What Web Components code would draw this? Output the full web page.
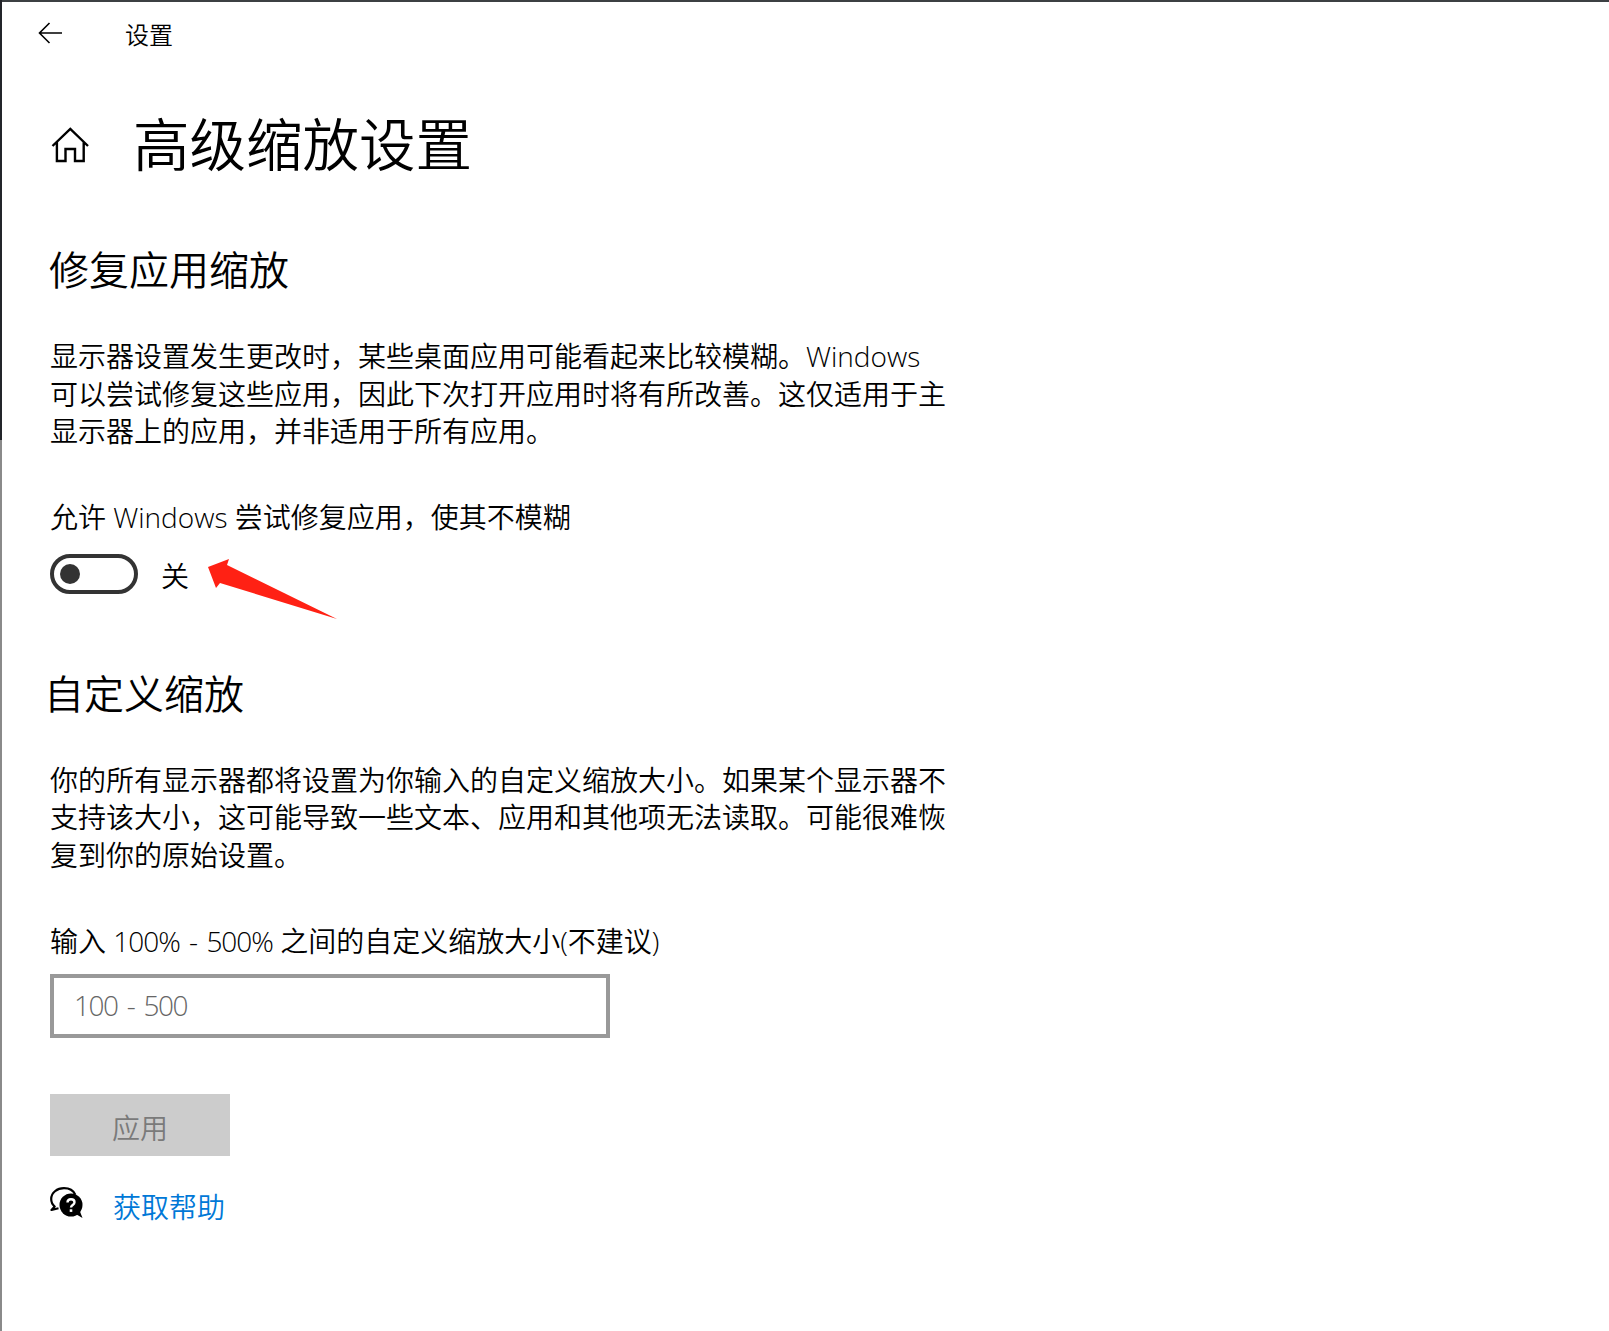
<!DOCTYPE html>
<html lang="zh-CN">
<head>
<meta charset="utf-8">
<title>高级缩放设置</title>
<style>
html, body { margin: 0; padding: 0; background: #fff; }
body { font-family: "Open Sans", "Noto Sans CJK SC", sans-serif; font-weight: 350; color: #000; }
.num { letter-spacing: -1px; word-spacing: 3px; }
</style>
</head>
<body>
<settings-page>
  <back-bar>设置</back-bar>
  <page-title>高级缩放设置</page-title>

  <section-heading>修复应用缩放</section-heading>
  <body-text>显示器设置发生更改时，某些桌面应用可能看起来比较模糊。Windows<br>可以尝试修复这些应用，因此下次打开应用时将有所改善。这仅适用于主<br>显示器上的应用，并非适用于所有应用。</body-text>
  <toggle-field label="允许 Windows 尝试修复应用，使其不模糊">关</toggle-field>

  <section-heading style="margin-top:70px;margin-left:-6px">自定义缩放</section-heading>
  <body-text>你的所有显示器都将设置为你输入的自定义缩放大小。如果某个显示器不<br>支持该大小，这可能导致一些文本、应用和其他项无法读取。可能很难恢<br>复到你的原始设置。</body-text>
  <text-field placeholder="100 - 500">输入 <span class="num">100% - 500%</span> 之间的自定义缩放大小(不建议)</text-field>
  <apply-button>应用</apply-button>
  <help-link>获取帮助</help-link>
</settings-page>

<script>
class SettingsPage extends HTMLElement {
  constructor() {
    super();
    this.attachShadow({mode: 'open'}).innerHTML = `
      <style>
        :host {
          display: block;
          position: relative;
          box-sizing: border-box;
          width: 1609px;
          height: 1331px;
          overflow: hidden;
          padding: 2px 0 0 50px;
          background: #fff;
        }
        /* the window edge showing at the top and left of the capture */
        .top { position: absolute; left: 0; top: 0; width: 100%; height: 2px; background: #3c4043; }
        .left { position: absolute; left: 0; top: 0; width: 2px; height: 100%;
          background: linear-gradient(#23252a 0, #23252a 440px, #8a8a8a 440px); }
        .arrow { position: absolute; left: 0; top: 0; }
      </style>
      <div class="top"></div>
      <div class="left"></div>
      <slot></slot>
      <svg class="arrow" width="400" height="700">
        <polygon fill="#ff2114" points="208,567 229,559 227,565 337,619 220,583 216,588"/>
      </svg>`;
  }
}

class BackBar extends HTMLElement {
  constructor() {
    super();
    this.attachShadow({mode: 'open'}).innerHTML = `
      <style>
        :host { display: flex; align-items: center; height: 66px; margin-left: -12px; font-size: 24px; }
        svg { width: 24px; height: 22px; margin-right: 63px; margin-top: -4px; }
        span { margin-top: -4px; }
      </style>
      <svg viewBox="0 0 24 22" fill="none" stroke="#000" stroke-width="1.6">
        <path d="M24 11H1.5M11.5 1 1.5 11l10 10"/>
      </svg>
      <span><slot></slot></span>`;
  }
}

class PageTitle extends HTMLElement {
  constructor() {
    super();
    this.attachShadow({mode: 'open'}).innerHTML = `
      <style>
        :host { display: flex; align-items: center; height: 80px; margin-top: 33px; font-size: 56.500px; color: #000; }
        svg { width: 38px; height: 38px; margin-left: 1px; margin-right: 44px; margin-top: 10px; }
      </style>
      <svg viewBox="0 0 38 38" fill="none" stroke="#000" stroke-width="2.4">
        <path d="M1.500 19 19.300 2 37 19M5.900 15V34H14.500V22H24V34H32.700V15"/>
      </svg>
      <span><slot></slot></span>`;
  }
}

class SectionHeading extends HTMLElement {
  constructor() {
    super();
    this.attachShadow({mode: 'open'}).innerHTML = `
      <style>
        :host { display: block; margin-top: 59px; margin-left: -1px; height: 60px; line-height: 60px; font-size: 40px; white-space: nowrap; }
      </style>
      <slot></slot>`;
  }
}

class BodyText extends HTMLElement {
  constructor() {
    super();
    this.attachShadow({mode: 'open'}).innerHTML = `
      <style>
        :host { display: block; margin-top: 38px; font-size: 28px; line-height: 37.500px; white-space: nowrap; }
      </style>
      <slot></slot>`;
  }
}

class ToggleField extends HTMLElement {
  constructor() {
    super();
    this.attachShadow({mode: 'open'}).innerHTML = `
      <style>
        :host { display: block; margin-top: 47px; font-size: 28px; white-space: nowrap; }
        .label { height: 38px; line-height: 38px; }
        .row { display: flex; align-items: center; margin-top: 18px; height: 40px; }
        .track { box-sizing: border-box; width: 88px; height: 40px; border: 4px solid #333;
          border-radius: 20px; display: flex; align-items: center; padding-left: 6px; margin-right: 23px; }
        .thumb { width: 20px; height: 20px; border-radius: 50%; background: #333; }
        span { margin-top: 2px; }
      </style>
      <div class="label"></div>
      <div class="row">
        <div class="track"><div class="thumb"></div></div>
        <span><slot></slot></span>
      </div>`;
    this.shadowRoot.querySelector('.label').textContent = this.getAttribute('label');
  }
}

class TextField extends HTMLElement {
  constructor() {
    super();
    this.attachShadow({mode: 'open'}).innerHTML = `
      <style>
        :host { display: block; margin-top: 48px; font-size: 28px; white-space: nowrap; }
        .label { height: 38px; line-height: 38px; }
        .box { box-sizing: border-box; width: 560px; height: 64px; margin-top: 14px;
          border: 4px solid #999; padding-left: 20px; line-height: 54px; color: #666; letter-spacing: -1.500px; word-spacing: 3.500px; }
      </style>
      <div class="label"><slot></slot></div>
      <div class="box"></div>`;
    this.shadowRoot.querySelector('.box').textContent = this.getAttribute('placeholder');
  }
}

class ApplyButton extends HTMLElement {
  constructor() {
    super();
    this.attachShadow({mode: 'open'}).innerHTML = `
      <style>
        :host { display: flex; align-items: center; justify-content: center; width: 180px; height: 62px;
          margin-top: 56px; background: #ccc; color: #7a7a7a; font-size: 28px; }
        span { margin-top: 3px; }
      </style>
      <span><slot></slot></span>`;
  }
}

class HelpLink extends HTMLElement {
  constructor() {
    super();
    this.attachShadow({mode: 'open'}).innerHTML = `
      <style>
        :host { display: flex; align-items: center; height: 40px; margin-top: 30px; font-size: 28px; color: #0078d7; }
        svg { width: 34px; height: 34px; margin-right: 29px; margin-top: -4px; }
      </style>
      <svg viewBox="0 0 34 34">
        <path d="M14 1.200C7 1.200 1.200 5.800 1.200 12c0 3 1.300 5.600 3.500 7.500L1.500 23l7-1.700" fill="#fff" stroke="#000" stroke-width="2.200" stroke-linejoin="round"/>
        <path d="M14 1.200c5 0 9.500 2.600 11.300 6.500" fill="none" stroke="#000" stroke-width="2.200"/>
        <circle cx="21" cy="18" r="11.500" fill="#000"/>
        <path d="M24 26l8.500 5-3.500-9z" fill="#000"/>
        <path d="M17.500 15.500c0-2 1.500-3.300 3.500-3.300s3.500 1.200 3.500 3c0 2.800-3.500 2.800-3.500 5.300" fill="none" stroke="#fff" stroke-width="2.400"/>
        <rect x="19.700" y="22.300" width="2.600" height="2.600" fill="#fff"/>
      </svg>
      <span><slot></slot></span>`;
  }
}

customElements.define('settings-page', SettingsPage);
customElements.define('back-bar', BackBar);
customElements.define('page-title', PageTitle);
customElements.define('section-heading', SectionHeading);
customElements.define('body-text', BodyText);
customElements.define('toggle-field', ToggleField);
customElements.define('text-field', TextField);
customElements.define('apply-button', ApplyButton);
customElements.define('help-link', HelpLink);
</script>
</body>
</html>
